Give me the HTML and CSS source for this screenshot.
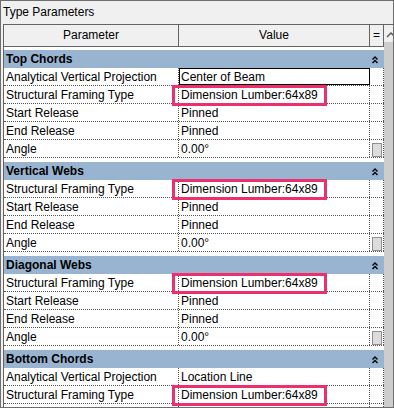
FILE: index.html
```html
<!DOCTYPE html>
<html>
<head>
    <title>Type Parameters</title>
    <link rel="stylesheet" href="styles.css">
</head>
<body>
    <div class="panel">
        <div class="title">Type Parameters</div>
        <div class="grid">
            <div class="table">
                <div class="head">
                    <div class="c1">Parameter</div>
                    <div class="c2">Value</div>
                    <div class="c3">=</div>
                </div>

                <div class="group">
                    <span class="name">Top Chords</span>
                    <span class="toggle"><svg width="8" height="9" viewBox="0 0 8 9"><path d="M1.5 4.5 L4 2 L6.5 4.5 M1.5 8 L4 5.5 L6.5 8" fill="none" stroke="#000" stroke-width="1.4"/></svg></span>
                </div>
                <div class="row"><div class="c1">Analytical Vertical Projection</div><div class="c2 edit">Center of Beam</div><div class="c3"></div></div>
                <div class="row"><div class="c1">Structural Framing Type</div><div class="c2">Dimension Lumber:64x89<span class="mark"></span></div><div class="c3"></div></div>
                <div class="row"><div class="c1">Start Release</div><div class="c2">Pinned</div><div class="c3"></div></div>
                <div class="row"><div class="c1">End Release</div><div class="c2">Pinned</div><div class="c3"></div></div>
                <div class="row"><div class="c1">Angle</div><div class="c2">0.00°</div><div class="c3"><div class="knob"></div></div></div>

                <div class="group">
                    <span class="name">Vertical Webs</span>
                    <span class="toggle"><svg width="8" height="9" viewBox="0 0 8 9"><path d="M1.5 4.5 L4 2 L6.5 4.5 M1.5 8 L4 5.5 L6.5 8" fill="none" stroke="#000" stroke-width="1.4"/></svg></span>
                </div>
                <div class="row"><div class="c1">Structural Framing Type</div><div class="c2">Dimension Lumber:64x89<span class="mark"></span></div><div class="c3"></div></div>
                <div class="row"><div class="c1">Start Release</div><div class="c2">Pinned</div><div class="c3"></div></div>
                <div class="row"><div class="c1">End Release</div><div class="c2">Pinned</div><div class="c3"></div></div>
                <div class="row"><div class="c1">Angle</div><div class="c2">0.00°</div><div class="c3"><div class="knob"></div></div></div>

                <div class="group">
                    <span class="name">Diagonal Webs</span>
                    <span class="toggle"><svg width="8" height="9" viewBox="0 0 8 9"><path d="M1.5 4.5 L4 2 L6.5 4.5 M1.5 8 L4 5.5 L6.5 8" fill="none" stroke="#000" stroke-width="1.4"/></svg></span>
                </div>
                <div class="row"><div class="c1">Structural Framing Type</div><div class="c2">Dimension Lumber:64x89<span class="mark"></span></div><div class="c3"></div></div>
                <div class="row"><div class="c1">Start Release</div><div class="c2">Pinned</div><div class="c3"></div></div>
                <div class="row"><div class="c1">End Release</div><div class="c2">Pinned</div><div class="c3"></div></div>
                <div class="row"><div class="c1">Angle</div><div class="c2">0.00°</div><div class="c3"><div class="knob"></div></div></div>

                <div class="group">
                    <span class="name">Bottom Chords</span>
                    <span class="toggle"><svg width="8" height="9" viewBox="0 0 8 9"><path d="M1.5 4.5 L4 2 L6.5 4.5 M1.5 8 L4 5.5 L6.5 8" fill="none" stroke="#000" stroke-width="1.4"/></svg></span>
                </div>
                <div class="row"><div class="c1">Analytical Vertical Projection</div><div class="c2">Location Line</div><div class="c3"></div></div>
                <div class="row"><div class="c1">Structural Framing Type</div><div class="c2">Dimension Lumber:64x89<span class="mark"></span></div><div class="c3"></div></div>
                <div class="row"><div class="c1"></div><div class="c2"></div><div class="c3"></div></div>
            </div>
            <div class="scroll">
                <div class="btn"><svg width="9" height="17" viewBox="0 0 9 17"><path d="M3 12 L7 8 L11 12" fill="none" stroke="#555" stroke-width="1.4"/></svg></div>
                <div class="track"></div>
            </div>
        </div>
    </div>
</body>
</html>
```

FILE: styles.css
```css
body {
    margin: 0;
    font-family: "Liberation Sans", Arial, sans-serif;
    font-size: 12px;
    color: #000;
}

.panel {
    width: 394px;
    height: 408px;
    box-sizing: border-box;
    border: 1px solid #6e6e6e;
    background: #f0f0f0;
    padding-left: 2px;
    display: flex;
    flex-direction: column;
    overflow: hidden;
}
.title {
    flex: none;
    height: 23px;
    line-height: 22px;
}

.grid {
    flex: 1;
    min-height: 0;
    display: flex;
    overflow: hidden;
    background: #fff;
    border-top: 1px solid #646464;
    border-left: 1px solid #646464;
}
.table {
    width: 380px;
    flex: none;
}

.c1, .c2, .c3 {
    box-sizing: border-box;
    border-right: 1px dotted #555;
    white-space: nowrap;
    padding-left: 2px;
}
.c1 {width: 175px;}
.c2 {width: 191px; position: relative;}
.c3 {width: 14px; padding-left: 0;}

.head {
    display: flex;
    height: 22px;
    line-height: 21px;
    background: #f0f0f0;
    border-bottom: 1px solid #646464;
    box-sizing: border-box;
    margin-bottom: 3px;
}
.head > div {
    border-right-style: solid;
    border-right-color: #646464;
    text-align: center;
    padding: 0;
}

.group {
    display: flex;
    height: 18px;
    line-height: 18px;
    margin-top: 4px;
    background: #99b4d1;
    font-weight: bold;
}
.head + .group {margin-top: 0;}
.group .name {
    flex: 1;
    padding-left: 2px;
}
.group .toggle {
    width: 14px;
    display: flex;
    align-items: center;
}
.group .toggle svg {margin-left: 1px;}

.row {
    display: flex;
    height: 18px;
    line-height: 18px;
    box-sizing: border-box;
    border-bottom: 1px dotted #555;
}
.edit {
    outline: 1px solid #000;
    outline-offset: -1px;
}
.mark {
    position: absolute;
    left: -7px;
    top: -1px;
    width: 155px;
    height: 21px;
    box-sizing: border-box;
    border: 3px solid #ee2f6c;
    z-index: 1;
}
.knob {
    width: 10px;
    height: 14px;
    margin: 3px 0 0 2px;
    box-sizing: border-box;
    border: 1px solid #8f8f8f;
    background: #dcdcdc;
}

.scroll {
    flex: 1;
    display: flex;
    flex-direction: column;
    overflow: hidden;
}
.scroll .btn {
    height: 17px;
    background: #f0f0f0;
}
.scroll .track {
    flex: 1;
    background: #cdcdcd;
}
```
